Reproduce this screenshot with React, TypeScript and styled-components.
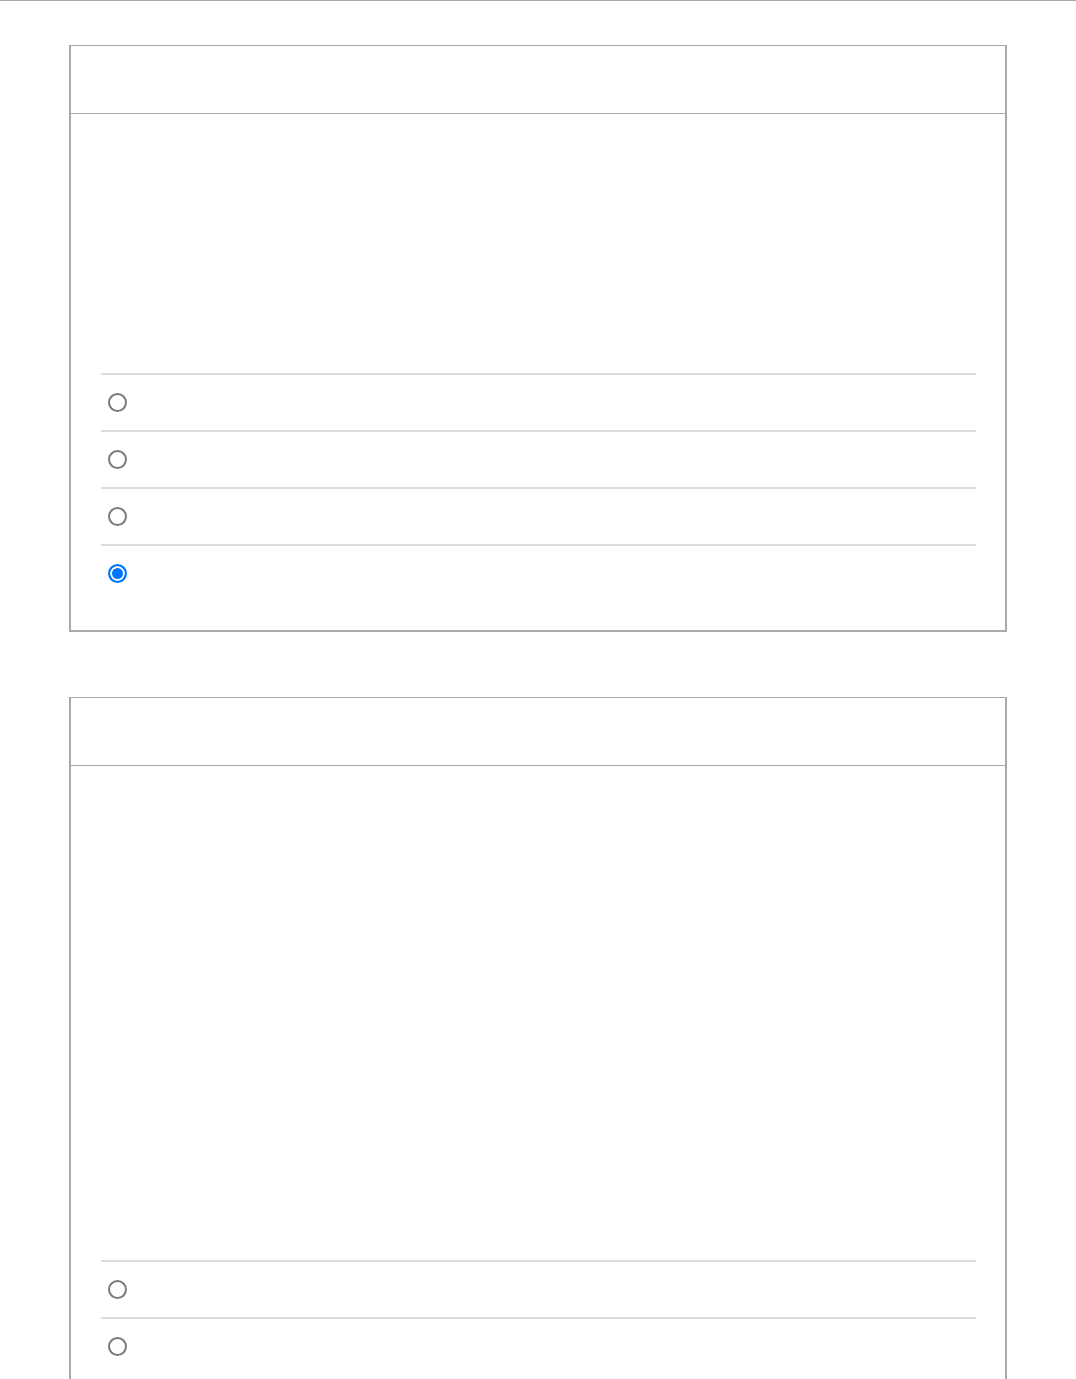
import styled, { createGlobalStyle } from "styled-components";

interface QuestionProps {
    promptHeight: number;
    options: number;
    checked?: number;
}

function Question({ promptHeight, options, checked }: QuestionProps) {
    return (
        <Card>
            <CardHeader />
            <CardBody>
                <Prompt $height={promptHeight} />
                <OptionList>
                    {Array.from({ length: options }).map((_, i) => (
                        <OptionRow key={i}>
                            <Radio type="radio" name={`q${promptHeight}`} defaultChecked={checked === i} />
                        </OptionRow>
                    ))}
                </OptionList>
            </CardBody>
        </Card>
    );
}

function App() {
    return (
        <>
            <GlobalStyle />
            <Page>
                <Question promptHeight={259} options={4} checked={3} />
                <Question promptHeight={494} options={2} />
            </Page>
        </>
    );
}

const GlobalStyle = createGlobalStyle`
    body{
        margin:0;
        background:#ffffff;
        font-family:"Liberation Sans", Arial, sans-serif;
    }
`
const Page = styled.div`
    border-top:1px solid #a9a9a9;
    padding:44px 69px 0 69px;
    display:flex;
    flex-direction:column;
    gap:65px;
`
const Card = styled.div`
    border:2px solid #a9a9a9;
    border-top-width:1px;
    background:#ffffff;
`
const CardHeader = styled.div`
    height:67px;
    border-bottom:1px solid #a9a9a9;
`
const CardBody = styled.div`
    padding:0 29px 29px 30px;
`
const Prompt = styled.div<{ $height: number }>`
    height:${(p) => p.$height}px;
`
const OptionList = styled.div`
    display:flex;
    flex-direction:column;
`
const OptionRow = styled.label`
    display:flex;
    align-items:center;
    height:55px;
    padding-left:7px;
    border-top:2px solid #dcdcdc;
`
const Radio = styled.input`
    appearance:none;
    width:19px;
    height:19px;
    margin:0;
    border:2px solid #7a7a7a;
    border-radius:50%;
    background:#ffffff;
    &:checked{
        border:2px solid #0075ff;
        background:#0075ff;
        box-shadow:inset 0 0 0 2px #ffffff;
    }
`

export default App
